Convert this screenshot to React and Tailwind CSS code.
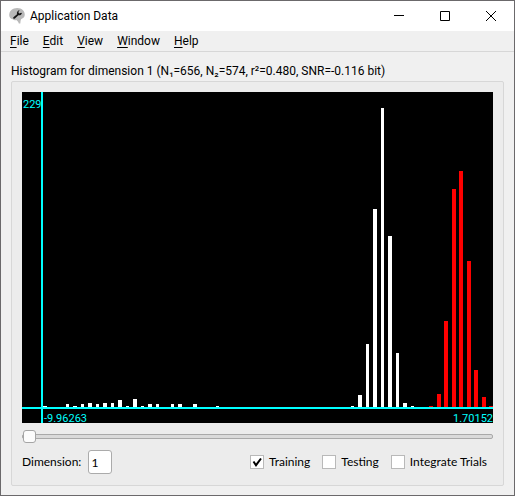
import { useState } from "react";

const WHITE = "#ffffff";
const RED = "#ff0000";

// [left, width, height, colour] in plot units; bars stand on the horizontal axis
const bars = [
  [21, 4, 1, WHITE], [44, 3, 3, WHITE], [51, 4, 1, WHITE], [59, 3, 3, WHITE],
  [66, 4, 4, WHITE], [74, 3, 3, WHITE], [81, 4, 4, WHITE], [89, 3, 4, WHITE],
  [96, 4, 7, WHITE], [104, 3, 1, WHITE], [111, 4, 8, WHITE], [119, 3, 1, WHITE],
  [126, 4, 3, WHITE], [134, 3, 3, WHITE], [149, 3, 3, WHITE], [156, 4, 3, WHITE],
  [171, 4, 3, WHITE], [194, 3, 1, WHITE], [329, 3, 1, WHITE], [336, 4, 12, WHITE],
  [344, 3, 63, WHITE], [351, 4, 198, WHITE], [359, 3, 299, WHITE], [366, 4, 171, WHITE],
  [374, 3, 54, WHITE], [381, 4, 4, WHITE], [389, 3, 1, WHITE],
  [407, 4, 1, RED], [415, 4, 13, RED], [422, 4, 86, RED], [430, 4, 218, RED],
  [437, 4, 236, RED], [445, 4, 146, RED], [452, 4, 37, RED], [460, 4, 10, RED],
  [467, 4, 1, RED],
];

const AXIS_Y = 315;

function Histogram() {
  return (
    <svg
      viewBox="0 0 471 331"
      className="block w-full overflow-visible bg-black"
      role="img"
      aria-label="Histogram"
      shapeRendering="crispEdges"
    >
      {bars.map(([x, w, h, fill]) => (
        <rect key={x} x={x} y={AXIS_Y - h} width={w} height={h} fill={fill} />
      ))}
      <rect x="0" y={AXIS_Y} width="471" height="2" fill="#00ffff" />
      <rect x="19" y="0" width="2" height="331" fill="#00ffff" />
      <g fill="#00ffff" fontSize="11">
        <text x="1" y="16">229</text>
        <text x="22" y="330">-9.96263</text>
        <text x="471" y="330" textAnchor="end">1.70152</text>
      </g>
    </svg>
  );
}

function AppIcon() {
  return (
    <svg viewBox="0 0 16 16" className="size-4" aria-hidden="true">
      <path
        d="M5 .6C8-.6 12 .1 14 2.200c1.900 2 2.300 5 1 7-.7 1-2 1.200-2.700 1.800-.8.7-.7 2.200-1 4.600H9.800c-.2-1.600-1.400-2.900-2.500-3.600-1.200.4-2.600.3-3.600-.7C1.400 11 .2 9.200.2 7c0-3 1.800-5.300 4.800-6.400Z"
        fill="#b9b9b9"
      />
      <path
        d="M4.400 9.200 8 6.200c-.4-1.600.2-3.200 2-4l.6.1-1.300 1.700.9 1.400 2-.6.7.5c-.4 1.600-1.900 2.300-3.500 1.900l-3.500 3.200c-1 .8-2.300-.1-1.500-1.200Z"
        fill="#151515"
      />
    </svg>
  );
}

function WindowButton({ label, children }) {
  return (
    <button type="button" aria-label={label} className="flex h-full w-[46px] items-center justify-center">
      <svg viewBox="0 0 10 10" className="size-[10px]" fill="none" stroke="#000" strokeWidth="1">
        {children}
      </svg>
    </button>
  );
}

function CheckOption({ label, initial }) {
  const [checked, setChecked] = useState(initial);
  return (
    <label className="flex items-center gap-[5px]">
      <span className="grid">
        <input
          type="checkbox"
          checked={checked}
          onChange={(e) => setChecked(e.target.checked)}
          className="col-start-1 row-start-1 size-[14px] appearance-none border border-[#b9b9b9] bg-white"
        />
        {checked && (
          <svg viewBox="0 0 14 14" className="pointer-events-none col-start-1 row-start-1 size-[14px]" fill="none">
            <path d="M3.500 6.500 6 10.200 11 3.500" stroke="#000" strokeWidth="2" />
          </svg>
        )}
      </span>
      {label}
    </label>
  );
}

const menus = ["File", "Edit", "View", "Window", "Help"];

export default function App() {
  const [dimension, setDimension] = useState("1");
  return (
    <div className="flex min-h-screen flex-col border border-[#6b696b] bg-[#f0f0f0] font-['Roboto','Open_Sans',sans-serif] text-[12px] leading-4 text-black">
      <header className="flex h-[30px] items-center bg-white pl-2">
        <AppIcon />
        <h1 className="ml-[5px] flex-1">Application Data</h1>
        <div className="flex h-full">
          <WindowButton label="Minimize">
            <path d="M0 4.500H10" />
          </WindowButton>
          <WindowButton label="Maximize">
            <path d="M.5.5h9v9h-9Z" />
          </WindowButton>
          <WindowButton label="Close">
            <path d="m0 0 10 10M10 0 0 10" />
          </WindowButton>
        </div>
      </header>

      <nav className="flex h-[21px] items-center gap-[14px] border-b border-[#d7d7d7] pl-[9px]">
        {menus.map((name) => (
          <button key={name} type="button">
            <span className="underline underline-offset-2">{name[0]}</span>
            {name.slice(1)}
          </button>
        ))}
      </nav>

      <main className="flex flex-1 flex-col px-[10px] pt-[11px] pb-[9px]">
        <h2 className="mb-[2px] whitespace-nowrap">
          Histogram for dimension 1 (N₁=656, N₂=574, r²=0.480, SNR=-0.116 bit)
        </h2>
        <section className="flex-1 rounded-[2px] border border-[#d7d7d7] bg-[#ececec] px-[10px] pt-[10px]">
          <Histogram />
          <input
            type="range"
            min="1"
            max="64"
            value={Number(dimension) || 1}
            onChange={(e) => setDimension(e.target.value)}
            aria-label="Dimension slider"
            className="mt-[7px] block h-[13px] w-full appearance-none bg-transparent [&::-webkit-slider-runnable-track]:h-[5px] [&::-webkit-slider-runnable-track]:rounded-[2px] [&::-webkit-slider-runnable-track]:border [&::-webkit-slider-runnable-track]:border-[#a9a9a9] [&::-webkit-slider-runnable-track]:bg-[#dadada] [&::-webkit-slider-thumb]:-mt-[5px] [&::-webkit-slider-thumb]:size-[13px] [&::-webkit-slider-thumb]:appearance-none [&::-webkit-slider-thumb]:rounded-[3px] [&::-webkit-slider-thumb]:border [&::-webkit-slider-thumb]:border-[#a5a5a5] [&::-webkit-slider-thumb]:bg-[#fcfcfc]"
          />
          <div className="mt-[7px] flex items-center font-['Lato','Open_Sans',sans-serif]">
            <label htmlFor="dimension">Dimension:</label>
            <input
              id="dimension"
              type="text"
              value={dimension}
              onChange={(e) => setDimension(e.target.value)}
              className="ml-[7px] h-6 w-6 rounded-[3px] border border-[#ababab] bg-white px-[2px]"
            />
            <div className="ml-auto flex items-center gap-3 pr-[6px]">
              <CheckOption label="Training" initial={true} />
              <CheckOption label="Testing" initial={false} />
              <CheckOption label="Integrate Trials" initial={false} />
            </div>
          </div>
        </section>
      </main>
    </div>
  );
}
